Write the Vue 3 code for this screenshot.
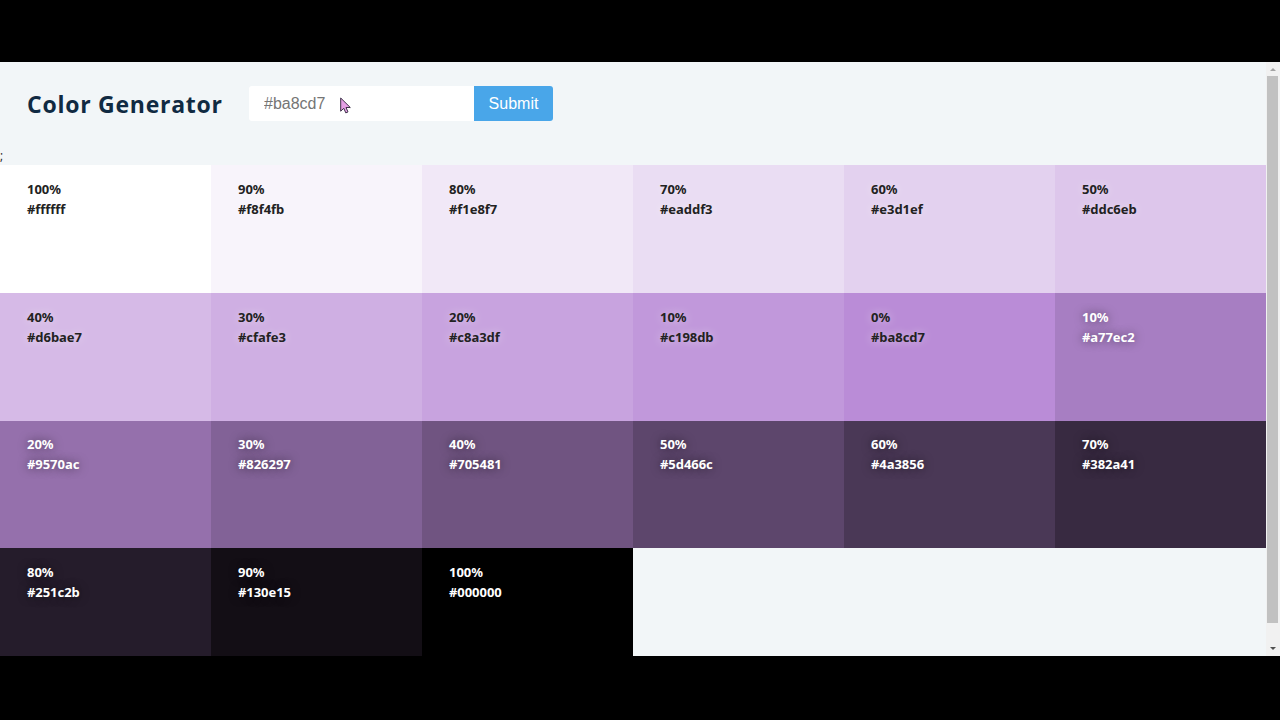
<script setup>
const colors = [
  ['100%', '#ffffff'], ['90%', '#f8f4fb'], ['80%', '#f1e8f7'], ['70%', '#eaddf3'], ['60%', '#e3d1ef'], ['50%', '#ddc6eb'],
  ['40%', '#d6bae7'], ['30%', '#cfafe3'], ['20%', '#c8a3df'], ['10%', '#c198db'], ['0%', '#ba8cd7'], ['10%', '#a77ec2'],
  ['20%', '#9570ac'], ['30%', '#826297'], ['40%', '#705481'], ['50%', '#5d466c'], ['60%', '#4a3856'], ['70%', '#382a41'],
  ['80%', '#251c2b'], ['90%', '#130e15'], ['100%', '#000000']
].map(([weight, hex], i) => ({ weight, hex, light: i > 10 }))
</script>

<template>
  <div class="screen">
    <div class="viewport">
      <main class="page">
        <section class="header">
          <h3>Color Generator</h3>
          <form @submit.prevent>
            <input type="text" placeholder="#ba8cd7" />
            <button type="submit">Submit</button>
          </form>
        </section>
        <div class="stray">;</div>
        <section class="colors">
          <article
            v-for="(c, i) in colors"
            :key="i"
            :class="{ light: c.light }"
            :style="{ backgroundColor: c.hex }"
          >
            <p>{{ c.weight }}</p>
            <p>{{ c.hex }}</p>
          </article>
        </section>
      </main>
      <aside class="scrollbar">
        <svg width="14" height="14" viewBox="0 0 14 14"><path d="M4 9 7 6l3 3z" fill="#a3a3a3" /></svg>
        <div class="thumb"></div>
        <svg class="down" width="14" height="14" viewBox="0 0 14 14"><path d="M4 5h6L7 8z" fill="#505050" /></svg>
      </aside>
    </div>
    <svg class="cursor" width="12" height="18" viewBox="0 0 12 18">
      <path d="M.7 1v13.2l3.1-2.9 2 4.6 2.2-1-2-4.4h4.3z" fill="#e5a0e6" stroke="#3c3048" stroke-width="1" />
    </svg>
  </div>
</template>

<style>
body { margin: 0; background: #000; }
</style>

<style scoped>
.screen {
  position: relative;
  box-sizing: border-box;
  width: 1280px;
  height: 720px;
  padding: 62px 0 64px;
  overflow: hidden;
  background: #000;
  font-family: "Open Sans", "Noto Sans", sans-serif;
  color: #222;
}
.viewport { display: flex; height: 594px; overflow: hidden; background: #f2f6f8; }
.page { width: 1266px; height: 594px; overflow: hidden; }
.header { display: flex; align-items: center; height: 83px; padding-left: 26px; }
h3 {
  box-sizing: border-box;
  width: 223px;
  margin: 0;
  padding-left: 1px;
  font: 700 23px/30px "Open Sans", sans-serif;
  letter-spacing: .75px;
  white-space: nowrap;
  color: #102a42;
}
form { display: flex; height: 35px; }
input {
  box-sizing: border-box;
  width: 225px;
  height: 35px;
  padding: 1px 15px 0;
  border: 0;
  border-radius: 3px 0 0 3px;
  background: #fff;
  font: 16px "Liberation Sans", sans-serif;
}
input::placeholder { color: #757575; opacity: 1; }
button {
  width: 79px;
  height: 35px;
  padding: 1px 0 0;
  border: 0;
  border-radius: 0 3px 3px 0;
  background: #49a6e9;
  color: #fff;
  font: 16px "Liberation Sans", sans-serif;
}
.stray { height: 20px; font-size: 12px; line-height: 22px; }
.colors { display: grid; grid-template-columns: repeat(6, 1fr); grid-template-rows: 128px 128px 127px 128px; }
article {
  box-sizing: border-box;
  padding: 14px 0 0 27px;
  text-shadow: 0 0 10px rgba(255, 255, 255, .5);
}
article.light { color: #fff; text-shadow: 0 0 10px rgba(0, 0, 0, .5); }
article:nth-child(n + 13):nth-child(-n + 18) { padding-top: 13px; }
p { margin: 0; font: 700 13px/20px "Noto Sans", sans-serif; letter-spacing: -.05px; }
.scrollbar { display: flex; flex-direction: column; width: 14px; background: #f1f1f1; }
.scrollbar svg { display: block; flex: none; }
.thumb { width: 11px; height: 547px; margin-left: 1px; background: #c1c1c1; }
.down { margin-top: auto; }
.cursor { position: absolute; left: 340px; top: 97px; }
</style>
